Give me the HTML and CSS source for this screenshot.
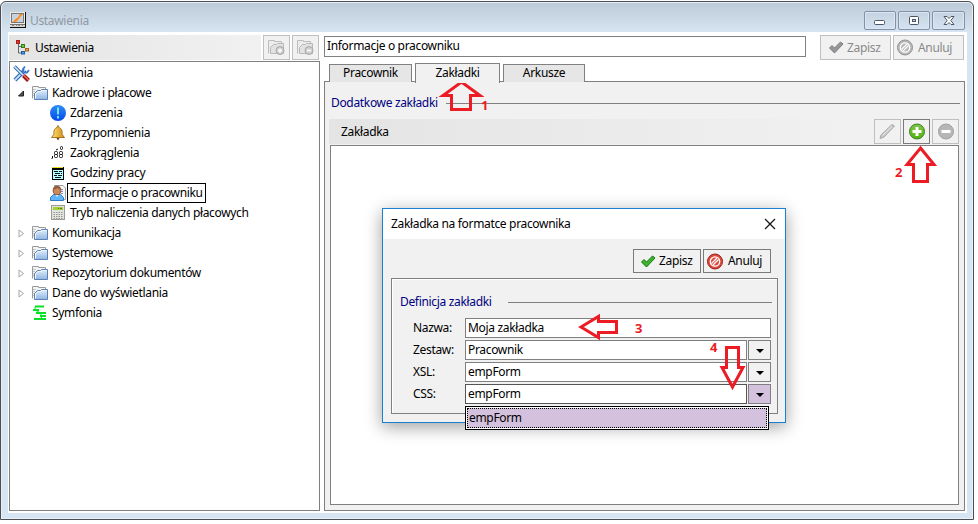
FILE: index.html
```html
<!DOCTYPE html>
<html lang="pl">
<head>
  <meta charset="UTF-8" />
  <title>Ustawienia</title>
  <link rel="stylesheet" href="styles.css">
</head>
<body>

<!-- shared icons -->
<svg class="defs" width="0" height="0">
  <defs>
    <linearGradient id="gFolder" x1="0" y1="0" x2="0" y2="1">
      <stop offset="0" stop-color="#e3effb" /><stop offset="1" stop-color="#8fb5e2" />
    </linearGradient>
    <linearGradient id="gBell" x1="0" y1="0" x2="1" y2="0">
      <stop offset="0" stop-color="#ffe27a" /><stop offset="1" stop-color="#d08a10" />
    </linearGradient>
    <linearGradient id="gGreen" x1="0" y1="0" x2="0" y2="1">
      <stop offset="0" stop-color="#7fc64a" /><stop offset="1" stop-color="#52b30c" />
    </linearGradient>
    <linearGradient id="gBlue" x1="0" y1="0" x2="0" y2="1">
      <stop offset="0" stop-color="#2f8cf8" /><stop offset="1" stop-color="#0648e8" />
    </linearGradient>
  </defs>
  <symbol id="folder" viewBox="0 0 17 16">
    <path d="M.5 13.500V1.500h6v1h7v3" fill="#f4f4f4" stroke="#9a9a9a" />
    <path d="M1 4.500h3M1 6.500h2M1 8.500h1M1 10.500h1" stroke="#c4c4c4" />
    <path d="M2.500 14.500V8.500l3-3h3l1-1h6v10z" fill="url(#gFolder)" stroke="#5a82b4" />
    <path d="M3.500 13.500V9l2.500-2.500h3l1-1h4.500" fill="none" stroke="#f4f9ff" />
  </symbol>
  <symbol id="folder-gray" viewBox="0 0 17 17">
    <path d="M.5 14.500v-13h6v1h7v3" fill="#ececec" stroke="#bcbcbc" />
    <path d="M2.500 14.500V8.500l3-3h3l1-1h6v10z" fill="#e2e2e2" stroke="#b8b8b8" />
    <circle cx="12" cy="11.500" r="4" fill="#cfcfcf" stroke="#a6a6a6" />
  </symbol>
  <symbol id="check" viewBox="0 0 15 13">
    <path d="M.5 7l2.500-2.500L5.500 7l6-6L14 3 5.500 12z" stroke-width="1" stroke-linejoin="round" />
  </symbol>
  <symbol id="ban" viewBox="0 0 17 17">
    <circle cx="8" cy="8.500" r="7.500" />
    <circle cx="8" cy="8.500" r="4.700" fill="none" stroke="#fff" stroke-width="1.300" />
    <path d="M4.500 10.500l5.500-5.500M6 12l5.500-5.500" stroke="#fff" stroke-width="1.200" />
  </symbol>
  <symbol id="expand" viewBox="0 0 7 9">
    <path d="M1 1l4.500 3.500L1 8z" fill="#fff" stroke="#a6a6a6" />
  </symbol>
</svg>

<div class="window">
  <div class="titlebar">
    <svg class="app-icon" width="16" height="16" viewBox="0 0 16 16">
      <rect width="16" height="16" fill="#111" />
      <rect x="0" y="0" width="15" height="12" fill="#eeebe6" />
      <rect x="1.500" y="1.500" width="12" height="9" fill="#c8d3e0" stroke="#777" />
      <path d="M3 10L5.500 7 8 5.500l2-3.500h3l-3 3.500L8 8l-2 2z" fill="#ff8c1a" />
      <path d="M0 12.500h15V15H0z" fill="#ddd8cf" />
      <path d="M2 13.500h2M6 13.500h1M8 13.500h2M12 13.500h1" stroke="#888" />
    </svg>
    <span class="title">Ustawienia</span>
    <div class="win-button"><svg width="12" height="12"><rect x=".5" y="5.500" width="10" height="4" rx="1" fill="#fff" stroke="#4b5566" /></svg></div>
    <div class="win-button"><svg width="12" height="12"><rect x="1.500" y="1.500" width="9" height="8" rx="1" fill="#fff" stroke="#4b5566" /><rect x="4.500" y="4.500" width="3" height="2" fill="#c4d2e3" stroke="#4b5566" /></svg></div>
    <div class="win-button last"><svg width="12" height="12"><path d="M1 1.500h3l2 2 2-2h3L7.800 5.500l3.200 4H8l-2-2-2 2H1l3.200-4z" fill="#fff" stroke="#4b5566" /></svg></div>
  </div>

  <div class="client">
    <div class="sidebar">
      <div class="toolbar">
        <div class="heading side-heading">
          <svg width="14" height="15" viewBox="0 0 14 15">
            <path d="M2.500 4v9H6M2.500 6.500H5M9 8.500h2" fill="none" stroke="#666" />
            <rect x=".5" y=".5" width="3" height="3" fill="#e0322e" stroke="#a8201c" />
            <rect x="5.500" y="4.500" width="3" height="3" fill="#68c83c" stroke="#347c16" />
            <rect x="9.500" y="8.500" width="3" height="2.500" fill="#f0a044" stroke="#a8601c" />
            <rect x="5.500" y="11.500" width="3" height="2.500" fill="#3a9ff0" stroke="#1c5ea0" />
          </svg>
          <span>Ustawienia</span>
        </div>
        <div class="tool disabled"><svg width="17" height="17"><use href="#folder-gray" /><path d="M12 9.500v4M10 11.500h4" stroke="#fff" stroke-width="1.500" /></svg></div>
        <div class="tool disabled"><svg width="17" height="17"><use href="#folder-gray" /><path d="M10 11.500h4" stroke="#fff" stroke-width="1.500" /></svg></div>
      </div>

      <div class="tree">
        <div class="row root">
          <svg width="17" height="17" viewBox="0 0 17 17">
            <path d="M2 15L12 5" stroke="#2e66b5" stroke-width="4" />
            <path d="M2 15L12 5" stroke="#b9dcfa" stroke-width="2" />
            <path d="M12 1.500L10 4v2.500l2 1h2L16 5" fill="none" stroke="#3a78c8" stroke-width="1.800" />
            <path d="M1.500 1.500L10 10" stroke="#2e66b5" stroke-width="3.400" />
            <path d="M1.500 1.500L10 10" stroke="#d9ebfc" stroke-width="1.500" />
            <path d="M10.500 10.500l5 5" stroke="#8f1010" stroke-width="4" />
            <path d="M11 10.500l4.500 4.500" stroke="#f26a5e" stroke-width="1.600" />
          </svg>
          <span>Ustawienia</span>
        </div>
        <div class="row branch">
          <svg class="arrow" width="7" height="9"><path d="M5.500 2v5h-5z" fill="#555" stroke="#222" /></svg>
          <svg width="17" height="16"><use href="#folder" /></svg>
          <span>Kadrowe i płacowe</span>
        </div>
        <div class="row leaf">
          <svg width="17" height="16" viewBox="0 0 17 16"><circle cx="8" cy="8" r="8" fill="url(#gBlue)" /><path d="M8 2.500v7M8 11v2.500" stroke="#6fe8ff" stroke-width="2" /></svg>
          <span>Zdarzenia</span>
        </div>
        <div class="row leaf">
          <svg width="17" height="16" viewBox="0 0 17 16"><path d="M8 .5L9.500 3c3 1 2.500 4 2.700 6.500L14.500 12.500h-13L3.800 9.500C4 7 3.500 4 6.500 3z" fill="url(#gBell)" stroke="#a8741c" /><path d="M6.500 13h3L8 15.500z" fill="#70400c" /></svg>
          <span>Przypomnienia</span>
        </div>
        <div class="row leaf">
          <svg width="17" height="16" viewBox="0 0 17 16"><g fill="none" stroke="#111"><path d="M2.500 11v2l-1 1" /><rect x="4.500" y="6.500" width="3" height="3" rx="1" /><rect x="4.500" y="9.500" width="3" height="3" rx="1" /><rect x="9.500" y="6.500" width="3" height="3" rx="1" /><rect x="9.500" y="9.500" width="3" height="3" rx="1" /><rect x="10.500" y="1.500" width="2" height="3" rx="1" /><path d="M6 5l2-1" /></g></svg>
          <span>Zaokrąglenia</span>
        </div>
        <div class="row leaf">
          <svg width="17" height="16" viewBox="0 0 17 16"><rect x="2" y="2" width="12" height="13" fill="#000" /><path d="M2 2.500h11" stroke="#e8dc30" /><path d="M3 5h10v9H3z" fill="#b4ffff" /><path d="M4 6.500h4M9 6.500h3M5 8.500h5M11 8.500h1M4 10.500h3M8 10.500h4M5 12.500h6" stroke="#111" /></svg>
          <span>Godziny pracy</span>
        </div>
        <div class="row leaf">
          <svg width="17" height="16" viewBox="0 0 17 16"><path d="M4.500.500H13L15.500 3v11.500h-11z" fill="#f6f6f6" stroke="#9e9e9e" /><path d="M11 4.500h2M11 6.500h2M11 8.500h2" stroke="#8a86d8" /><path d="M.5 15.500v-3l3-3h7l3 3v3z" fill="#5fb5f8" stroke="#2c7cc8" /><path d="M5 9.500l2 2.500 2-2.500" fill="#fff" /><ellipse cx="7" cy="5.500" rx="3.800" ry="4.300" fill="#cc8858" stroke="#8c5430" /><path d="M3 5C3 0 11 0 11 5L7.500 3z" fill="#8d5c3e" /></svg>
          <span class="selected">Informacje o pracowniku</span>
        </div>
        <div class="row leaf">
          <svg width="17" height="16" viewBox="0 0 17 16"><rect x="1.500" y=".5" width="13" height="14" fill="#e2e2de" stroke="#9c9c96" /><rect x="3" y="2" width="10" height="3" fill="#a5d037" /><path d="M8 3.500h1M10 3.500h2" stroke="#587818" /><path d="M3.500 7.500h9M3.500 9.500h9M3.500 11.500h9M3.500 13.500h9" stroke="#9a9a94" stroke-dasharray="1.500 1" /></svg>
          <span>Tryb naliczenia danych płacowych</span>
        </div>
        <div class="row branch">
          <svg class="arrow" width="7" height="9"><use href="#expand" /></svg>
          <svg width="17" height="16"><use href="#folder" /></svg>
          <span>Komunikacja</span>
        </div>
        <div class="row branch">
          <svg class="arrow" width="7" height="9"><use href="#expand" /></svg>
          <svg width="17" height="16"><use href="#folder" /></svg>
          <span>Systemowe</span>
        </div>
        <div class="row branch">
          <svg class="arrow" width="7" height="9"><use href="#expand" /></svg>
          <svg width="17" height="16"><use href="#folder" /></svg>
          <span>Repozytorium dokumentów</span>
        </div>
        <div class="row branch">
          <svg class="arrow" width="7" height="9"><use href="#expand" /></svg>
          <svg width="17" height="16"><use href="#folder" /></svg>
          <span>Dane do wyświetlania</span>
        </div>
        <div class="row branch">
          <svg class="arrow" width="7" height="9"></svg>
          <svg width="17" height="16" viewBox="0 0 17 16"><path d="M3 1.500h9M1 5h6M4 8h10M8 11h6M2 14h12" stroke="#0be028" stroke-width="2" /><path d="M3 2v3l4 2M8 8l2 3-1 3" fill="none" stroke="#0be028" /></svg>
          <span>Symfonia</span>
        </div>
      </div>
    </div>

    <div class="main">
      <div class="toolbar">
        <div class="name-field">Informacje o pracowniku</div>
        <div class="button disabled"><svg width="15" height="13" fill="#969696" stroke="#7c7c7c"><use href="#check" /></svg><span>Zapisz</span></div>
        <div class="button disabled cancel"><svg width="17" height="17" fill="#b8b8b8" stroke="#929292"><use href="#ban" /></svg><span>Anuluj</span></div>
      </div>

      <div class="tabs">
        <div class="tab">Pracownik</div>
        <div class="tab active">Zakładki</div>
        <div class="tab">Arkusze</div>
      </div>

      <div class="panel">
        <div class="legend"><span>Dodatkowe zakładki</span><i></i></div>
        <div class="toolbar list-toolbar">
          <div class="heading list-heading"><span>Zakładka</span></div>
          <div class="tool disabled"><svg width="17" height="17"><path d="M1 15.500l1-3.500L13 1.500 15.500 3 5 14z" fill="#cacaca" stroke="#a8a8a8" /><path d="M3.500 12.500L13 3.500" stroke="#e8e8e8" /></svg></div>
          <div class="tool"><svg width="17" height="17"><circle cx="9" cy="8.500" r="7.500" fill="url(#gGreen)" stroke="#3f7f1c" /><path d="M9 4v9M4.500 8.500h9" stroke="#fff" stroke-width="3" /></svg></div>
          <div class="tool disabled"><svg width="17" height="17"><circle cx="9" cy="8.500" r="7.500" fill="#b6b6b6" stroke="#a0a0a0" /><path d="M4.500 8.500h9" stroke="#fff" stroke-width="3" /></svg></div>
        </div>
        <div class="list"></div>
      </div>
    </div>
  </div>
</div>

<div class="dialog">
  <div class="dialog-title">
    <span>Zakładka na formatce pracownika</span>
    <svg width="12" height="12"><path d="M1 1l10 10M11 1L1 11" stroke="#111" stroke-width="1.200" /></svg>
  </div>
  <div class="dialog-buttons">
    <div class="button"><svg width="15" height="13" fill="#3cb52d" stroke="#1a7414"><use href="#check" /></svg><span>Zapisz</span></div>
    <div class="button cancel"><svg width="17" height="17" fill="#e0483e" stroke="#96201a"><use href="#ban" /></svg><span>Anuluj</span></div>
  </div>
  <div class="group">
    <div class="legend"><span>Definicja zakładki</span><i></i></div>
    <div class="field"><label>Nazwa:</label><div class="input">Moja zakładka</div></div>
    <div class="field"><label>Zestaw:</label><div class="input">Pracownik</div><div class="drop"></div></div>
    <div class="field"><label>XSL:</label><div class="input">empForm</div><div class="drop"></div></div>
    <div class="field"><label>CSS:</label><div class="input focus">empForm</div><div class="drop open"></div></div>
  </div>
  <div class="options"><div class="option">empForm</div></div>
</div>

<!-- step arrows -->
<svg class="marks" width="978" height="524" fill="none" stroke="#ed1c24" stroke-width="3">
  <path d="M461.500 82L480 95.500H470.500V109.500H451.500V95.500H443z" />
  <path d="M920.500 148L934 164.500H927.500V181.500H913.500V164.500H907z" />
  <path d="M581 327L598.500 316.500V321.500H616.500V332.500H598.500V337.500z" />
  <path d="M726.500 347.500H738.500V367.500H743L732.500 387 722 367.500H726.500z" />
</svg>
<span class="step s1">1</span>
<span class="step s2">2</span>
<span class="step s3">3</span>
<span class="step s4">4</span>

</body>
</html>
```
FILE: styles.css
```css
* {
  box-sizing: border-box;
}
body {
  margin: 0;
  width: 978px;
  height: 524px;
  overflow: hidden;
  background: #fff;
  font-family: "Noto Sans", "Open Sans", sans-serif;
  font-size: 12px;
  line-height: 16px;
  letter-spacing: -0.33px;
  color: #000;
  white-space: nowrap;
}
svg {
  display: block;
  flex: none;
}
.defs {
  position: absolute;
}

/* main window */
.window {
  width: 974px;
  height: 519px;
  margin-top: 1px;
  padding: 0 6px 6px;
  border: 1px solid #4b4d50;
  border-radius: 6px 6px 0 0;
  background: linear-gradient(#bccad8, #d7e4f1 30px);
  box-shadow: inset 0 0 0 1px #e8f1fa;
}
.titlebar {
  display: flex;
  height: 30px;
  padding: 9px 2px 0 3px;
}
.app-icon {
  margin-top: 1px;
}
.title {
  flex: 1;
  margin: 2px 0 0 4px;
  color: #8f99a3;
}
.win-button {
  display: flex;
  align-items: center;
  justify-content: center;
  width: 32px;
  height: 19px;
  margin-right: 2px;
  border: 1px solid #8292a6;
  border-radius: 2px;
  background: linear-gradient(#c5d2e0, #d5e2ef);
  box-shadow: inset 0 0 0 1px #dbe6f1;
}
.win-button.last {
  width: 33px;
  margin-right: 0;
}
.client {
  display: flex;
  gap: 4px;
  height: 481px;
  margin-left: 1px;
  padding: 3px 1px 2px 0;
  border-left: 1px solid #fff;
  background: #fff;
}
.toolbar {
  display: flex;
  gap: 2px;
  height: 25px;
}
.heading {
  display: flex;
  align-items: center;
  flex: 1;
  background: linear-gradient(90deg, #e4e4e4, #f1f1f1);
}
.tool,
.button {
  display: flex;
  align-items: center;
  justify-content: center;
  border: 1px solid #7a7a7a;
  background: #f1f1f1;
}
.tool {
  width: 27px;
}
.tool.disabled,
.button.disabled {
  border-color: #bfbfbf;
  color: #8a8a8a;
}
.button {
  width: 68px;
  height: 24px;
  justify-content: flex-start;
  padding-left: 7px;
}
.button span {
  margin-left: 3px;
}
.button.cancel {
  padding-left: 3px;
}
.button.cancel span {
  margin-left: 4px;
}

/* left side */
.sidebar {
  width: 311px;
}
.sidebar .toolbar {
  margin-right: 1px;
}
.side-heading {
  padding-left: 7px;
}
.side-heading span {
  margin-left: 5px;
}
.tree {
  height: 450px;
  margin-top: 1px;
  padding-top: 1px;
  border: 1px solid #808080;
}
.row {
  display: flex;
  align-items: center;
  height: 20px;
}
.row span {
  margin-left: 1px;
  padding: 1px 2px;
}
.root {
  padding-left: 3px;
}
.root span {
  margin-left: 2px;
}
.branch {
  padding-left: 8px;
}
.arrow {
  margin-right: 7px;
}
.leaf {
  padding-left: 40px;
}
.row .selected {
  margin-left: 0;
  border: 1px solid #000;
}

/* right side */
.main {
  width: 641px;
}
.name-field {
  width: 482px;
  height: 21px;
  margin: 1px 12px 0 0;
  padding: 1px 2px;
  border: 1px solid #808080;
  background: #fff;
}
.main .toolbar .button {
  width: 71px;
  height: 25px;
}
.main .toolbar .button:not(.cancel) {
  padding-left: 8px;
}
.tabs {
  display: flex;
  align-items: flex-end;
  gap: 3px;
  height: 22px;
  padding-left: 5px;
}
.tab {
  width: 83px;
  height: 18px;
  border: 1px solid #808080;
  border-bottom: 0;
  background: #e6e6e6;
  text-align: center;
}
.tab:last-child {
  width: 82px;
}
.tab.active {
  position: relative;
  z-index: 1;
  width: 85px;
  height: 20px;
  margin-bottom: -1px;
  padding-top: 1px;
  background: #f1f1f1;
}
.panel {
  height: 430px;
  margin-top: -1px;
  padding: 13px 5px 5px 4px;
  border: 1px solid #808080;
  background: #f1f1f1;
}
.legend {
  display: flex;
  align-items: center;
  color: #000080;
}
.legend i {
  flex: 1;
  margin-left: 10px;
  border-top: 1px solid #808080;
}
.panel .legend {
  margin: 0 -1px 0 2px;
}
.panel .legend i {
  margin-left: 8px;
}
.list-toolbar {
  margin-top: 8px;
}
.list-heading {
  padding-left: 12px;
}
.list {
  height: 360px;
  margin: 1px 0 0 1px;
  border: 1px solid #808080;
  background: #fff;
}

/* dialog */
.dialog {
  position: absolute;
  left: 382px;
  top: 208px;
  width: 404px;
  height: 215px;
  border: 1px solid #1a7fd0;
  background: #f1f1f1;
  box-shadow: 0 4px 16px rgba(0, 0, 0, 0.38);
}
.dialog-title {
  display: flex;
  justify-content: space-between;
  align-items: center;
  height: 30px;
  padding: 0 9px 0 8px;
  background: #fff;
}
.dialog-buttons {
  display: flex;
  justify-content: flex-end;
  gap: 2px;
  margin: 10px 14px 5px;
}
.group {
  width: 387px;
  height: 136px;
  margin-left: 8px;
  padding: 15px 6px 0 8px;
  border: 1px solid #808080;
  box-shadow: inset 1px 1px #fff;
}
.group .legend {
  margin: 0 -1px 8px 0;
}
.group .legend i {
  margin-left: 16px;
}
.field {
  display: flex;
  height: 20px;
  margin-bottom: 2px;
  padding-left: 13px;
}
.field label {
  width: 52px;
  padding-top: 2px;
}
.input {
  flex: 1;
  padding: 1px 2px;
  border: 1px solid #808080;
  background: #fff;
}
.input.focus {
  border-color: #555;
}
.drop {
  display: flex;
  align-items: center;
  justify-content: center;
  width: 23px;
  margin-left: 1px;
  border: 1px solid #808080;
}
.drop::after {
  content: "";
  margin-top: 2px;
  border: 4px solid transparent;
  border-top-color: #000;
  border-bottom: 0;
}
.drop.open {
  background: #d3c1dd;
}
.options {
  position: absolute;
  left: 82px;
  top: 197px;
  width: 304px;
  height: 24px;
  padding: 1px;
  border: 1px solid #000;
  background: #fff;
}
.option {
  height: 20px;
  padding: 1px 1px;
  border: 1px dotted #000;
  background: #d3c1dd;
}

/* step arrows */
.marks {
  position: absolute;
  left: 0;
  top: 0;
}
.step {
  position: absolute;
  color: #ed1c24;
  font-family: "Open Sans", "Noto Sans", sans-serif;
  font-size: 13px;
  font-weight: bold;
}
.s1 { left: 481px; top: 97px; }
.s2 { left: 895px; top: 164px; }
.s3 { left: 635px; top: 320px; }
.s4 { left: 710px; top: 339px; }
```
